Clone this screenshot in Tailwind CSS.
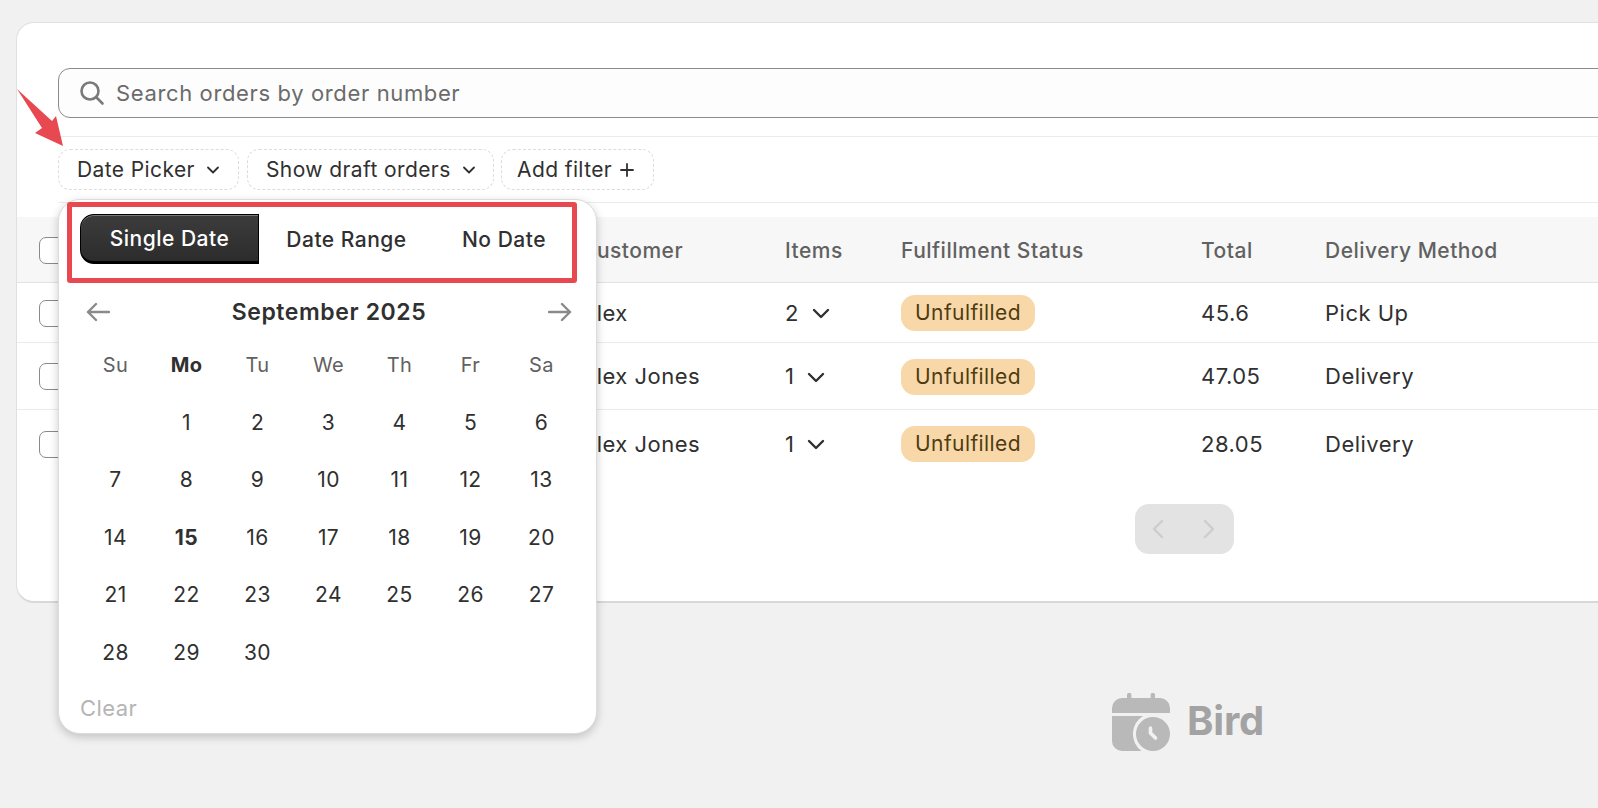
<!DOCTYPE html>
<html lang="en">
<head>
    <meta charset="UTF-8">
    <title>Orders</title>
    <script src="https://cdn.jsdelivr.net/npm/@tailwindcss/browser@4"></script>
</head>
<body class="relative h-screen overflow-hidden bg-[#f1f1f1] font-['Inter',sans-serif] text-[#303030]">
    <!-- orders card -->
    <div class="ml-[16px] mt-[22px] h-[581px] w-[1700px] rounded-[18px] border border-[#e0e0e0] border-b-2 border-b-[#d8d8d8] bg-white">
        <div class="ml-[41px] mt-[45px] flex h-[50px] items-center gap-[11px] rounded-[12px] border border-[#8a8a8a] bg-[#fdfdfd] pl-[20px] text-[22px] tracking-[0.63px] text-[#6b6b6b]">
            <svg class="size-[26px]" viewBox="0 0 26 26" fill="none" stroke="#7a7a7a" stroke-width="2.6" stroke-linecap="round"><circle cx="11" cy="11" r="8.5"/><path d="M17.5 17.5l6 6"/></svg>
            <span class="pt-[1px]">Search orders by order number</span>
        </div>
        <div class="ml-[41px] mt-[18px] flex h-[67px] gap-[8px] border-y border-[#ebebeb] pt-[12px] text-[21px] tracking-[0.4px]">
            <div class="flex h-[41px] w-[181px] items-center gap-[10px] rounded-[12px] border border-dashed border-[#dcdcdc] pl-[18px]">
                Date Picker
                <svg class="size-[16px]" viewBox="0 0 16 16" fill="none" stroke="#303030" stroke-width="1.8" stroke-linecap="round" stroke-linejoin="round"><path d="M3 5.5l5 5 5-5"/></svg>
            </div>
            <div class="flex h-[41px] w-[247px] items-center gap-[10px] rounded-[12px] border border-dashed border-[#dcdcdc] pl-[18px]">
                Show draft orders
                <svg class="size-[16px]" viewBox="0 0 16 16" fill="none" stroke="#303030" stroke-width="1.8" stroke-linecap="round" stroke-linejoin="round"><path d="M3 5.5l5 5 5-5"/></svg>
            </div>
            <div class="-ml-[1px] flex h-[41px] w-[153px] items-center gap-[7px] rounded-[12px] border border-dashed border-[#dcdcdc] pl-[15px]">
                Add filter
                <svg class="size-[16px]" viewBox="0 0 16 16" fill="none" stroke="#303030" stroke-width="1.8" stroke-linecap="round"><path d="M8 2v12M2 8h12"/></svg>
            </div>
        </div>
        <!-- table -->
        <div class="mt-[14px] text-[22px] tracking-[0.5px]">
            <div class="grid h-[66px] grid-cols-[564px_204px_116px_300px_124px_1fr] items-center border-b border-[#e3e3e3] bg-[#f7f7f7] pt-[2px] text-[21px] font-medium tracking-[0.5px] text-[#616161]">
                <div class="pl-[22px]"><div class="size-[27px] rounded-[7px] border border-[#8a8a8a] bg-white"></div></div>
                <div>Customer</div><div>Items</div><div>Fulfillment Status</div><div>Total</div><div>Delivery Method</div>
            </div>
            <div class="grid h-[60px] grid-cols-[564px_204px_116px_300px_124px_1fr] items-center border-b border-[#ebebeb] pt-[1px]">
                <div class="pl-[22px]"><div class="size-[27px] rounded-[7px] border border-[#8a8a8a] bg-white"></div></div>
                <div>Alex</div>
                <div class="flex items-center gap-[12px]">2 <svg class="size-[20px]" viewBox="0 0 20 20" fill="none" stroke="#303030" stroke-width="2.4" stroke-linecap="round" stroke-linejoin="round"><path d="M3 7l7 7 7-7"/></svg></div>
                <div><span class="inline-flex h-[36px] w-[134px] items-center justify-center rounded-[14px] bg-[#f8d8a8] text-[21px] tracking-[0.4px] text-[#4f3b12]">Unfulfilled</span></div>
                <div>45.6</div><div>Pick Up</div>
            </div>
            <div class="grid h-[67px] grid-cols-[564px_204px_116px_300px_124px_1fr] items-center border-b border-[#ebebeb] pt-[1px]">
                <div class="pl-[22px]"><div class="size-[27px] rounded-[7px] border border-[#8a8a8a] bg-white"></div></div>
                <div>Alex Jones</div>
                <div class="flex items-center gap-[12px]">1 <svg class="size-[20px]" viewBox="0 0 20 20" fill="none" stroke="#303030" stroke-width="2.4" stroke-linecap="round" stroke-linejoin="round"><path d="M3 7l7 7 7-7"/></svg></div>
                <div><span class="inline-flex h-[36px] w-[134px] items-center justify-center rounded-[14px] bg-[#f8d8a8] text-[21px] tracking-[0.4px] text-[#4f3b12]">Unfulfilled</span></div>
                <div>47.05</div><div>Delivery</div>
            </div>
            <div class="grid h-[67px] grid-cols-[564px_204px_116px_300px_124px_1fr] items-center pt-[1px]">
                <div class="pl-[22px]"><div class="size-[27px] rounded-[7px] border border-[#8a8a8a] bg-white"></div></div>
                <div>Alex Jones</div>
                <div class="flex items-center gap-[12px]">1 <svg class="size-[20px]" viewBox="0 0 20 20" fill="none" stroke="#303030" stroke-width="2.4" stroke-linecap="round" stroke-linejoin="round"><path d="M3 7l7 7 7-7"/></svg></div>
                <div><span class="inline-flex h-[36px] w-[134px] items-center justify-center rounded-[14px] bg-[#f8d8a8] text-[21px] tracking-[0.4px] text-[#4f3b12]">Unfulfilled</span></div>
                <div>28.05</div><div>Delivery</div>
            </div>
        </div>
        <div class="ml-[1118px] mt-[27px] flex h-[50px] w-[99px] items-center justify-between rounded-[14px] bg-[#e3e3e3] pl-[16px] pr-[18px]">
            <svg class="h-[20px] w-[14px]" viewBox="0 0 14 20" fill="none" stroke="#cdcdcd" stroke-width="2.4" stroke-linecap="round" stroke-linejoin="round"><path d="M11 2l-8 8 8 8"/></svg>
            <svg class="h-[20px] w-[14px]" viewBox="0 0 14 20" fill="none" stroke="#cdcdcd" stroke-width="2.4" stroke-linecap="round" stroke-linejoin="round"><path d="M3 2l8 8-8 8"/></svg>
        </div>
    </div>

    <!-- logo -->
    <div class="ml-[1112px] mt-[88px] flex items-center gap-[17px]">
        <svg class="h-[60px] w-[58px]" viewBox="0 0 58 60">
            <path fill="#b9b9b9" d="M15 2a2.2 2.2 0 0 1 4.4 0V5h19.2V2a2.2 2.2 0 0 1 4.4 0V5h5a10 10 0 0 1 10 10v5H0v-5A10 10 0 0 1 10 5h5z"/>
            <path fill="#b9b9b9" d="M0 23h31A21 21 0 0 0 29.6 58H10A10 10 0 0 1 0 48z"/>
            <circle cx="41" cy="41" r="17" fill="#b9b9b9"/>
            <path fill="none" stroke="#f1f1f1" stroke-width="3.6" stroke-linecap="round" d="M38.5 35v5l5 5"/>
        </svg>
        <span class="pb-[4px] text-[40px] font-bold tracking-[-0.2px] text-[#a3a3a3]">Bird</span>
    </div>

    <!-- red arrow -->
    <svg class="absolute left-[16px] top-[88px] h-[60px] w-[50px]" viewBox="0 0 50 60"><path fill="#e8484f" d="M1 1l35 32 4-5 7 30-28-13 7-5z"/></svg>

    <!-- date picker popup -->
    <div class="absolute left-[58px] top-[199px] h-[535px] w-[539px] rounded-[22px] border border-[#dcdcdc] bg-white shadow-[0_3px_10px_rgba(0,0,0,0.2)]">
        <div class="ml-[8px] mt-[2px] flex h-[81px] w-[510px] items-start rounded-[3px] border-[5px] border-[#e8484f] pl-[8px] pt-[7px] text-[21px] font-medium tracking-[0.5px]">
            <div class="flex h-[50px] w-[179px] shrink-0 items-center justify-center rounded-l-[14px] border border-b-[3px] border-black bg-gradient-to-b from-[#3c3c3c] to-[#2c2c2c] pt-[1px] text-white shadow-[inset_0_1px_0_#7a7a7a]">Single Date</div>
            <div class="flex h-[50px] w-[175px] shrink-0 items-center justify-center pt-[1px]">Date Range</div>
            <div class="ml-[2px] flex h-[50px] w-[136px] shrink-0 items-center justify-center pt-[1px]">No Date</div>
        </div>
        <div class="mt-[6px] flex h-[46px] items-center justify-between pl-[27px] pr-[24px]">
            <svg class="h-[20px] w-[24px]" viewBox="0 0 24 20" fill="none" stroke="#8a8a8a" stroke-width="2.4" stroke-linecap="round" stroke-linejoin="round"><path d="M23 10H2M10 2l-8 8 8 8"/></svg>
            <span class="text-[23px] font-semibold tracking-[0.6px]">September 2025</span>
            <svg class="h-[20px] w-[24px]" viewBox="0 0 24 20" fill="none" stroke="#8a8a8a" stroke-width="2.4" stroke-linecap="round" stroke-linejoin="round"><path d="M1 10h21M14 2l8 8-8 8"/></svg>
        </div>
        <div class="ml-[21px] mt-[1px] grid w-[497px] auto-rows-[57.5px] grid-cols-7 items-center text-center text-[21px] tracking-[0.4px]">
            <div class="text-[20px] text-[#616161]">Su</div><div class="text-[20px] font-bold">Mo</div><div class="text-[20px] text-[#616161]">Tu</div><div class="text-[20px] text-[#616161]">We</div><div class="text-[20px] text-[#616161]">Th</div><div class="text-[20px] text-[#616161]">Fr</div><div class="text-[20px] text-[#616161]">Sa</div>
            <div></div><div>1</div><div>2</div><div>3</div><div>4</div><div>5</div><div>6</div>
            <div>7</div><div>8</div><div>9</div><div>10</div><div>11</div><div>12</div><div>13</div>
            <div>14</div><div class="font-bold">15</div><div>16</div><div>17</div><div>18</div><div>19</div><div>20</div>
            <div>21</div><div>22</div><div>23</div><div>24</div><div>25</div><div>26</div><div>27</div>
            <div>28</div><div>29</div><div>30</div>
        </div>
        <div class="ml-[21px] mt-[11px] text-[22px] tracking-[0.4px] text-[#b5b5b5]">Clear</div>
    </div>
</body>
</html>
